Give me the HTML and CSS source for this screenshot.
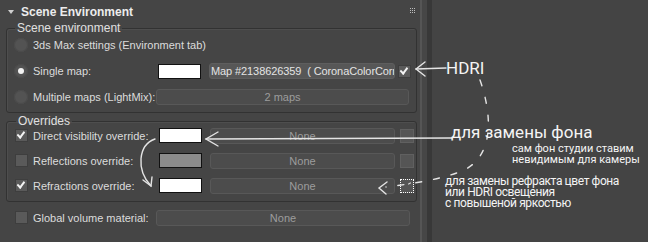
FILE: index.html
```html
<!DOCTYPE html>
<html>
<head>
<meta charset="utf-8">
<link rel="stylesheet" href="styles.css">
</head>
<body>
<div class="app">
  <div class="panel">
    <div class="header">
      <span class="tri"></span>
      <span class="title">Scene Environment</span>
      <svg class="grip" width="6" height="6" viewBox="0 0 6 6"><g fill="#bdbdbd"><rect x="0" y="0" width="1" height="1"/><rect x="2" y="0" width="1" height="1"/><rect x="4" y="0" width="1" height="1"/><rect x="0" y="2" width="1" height="1"/><rect x="2" y="2" width="1" height="1"/><rect x="4" y="2" width="1" height="1"/><rect x="0" y="4" width="1" height="1"/><rect x="2" y="4" width="1" height="1"/><rect x="4" y="4" width="1" height="1"/></g></svg>
    </div>

    <fieldset class="group g1">
      <legend>Scene environment</legend>
      <div class="row r1">
        <span class="radio"></span><span class="label">3ds Max settings (Environment tab)</span>
      </div>
      <div class="row">
        <span class="radio on"></span><span class="label fixed">Single map:</span>
        <span class="swatch"></span>
        <span class="btn map">Map #2138626359&nbsp; ( CoronaColorCorr</span>
        <span class="check on small"></span>
      </div>
      <div class="row">
        <span class="radio"></span><span class="label lm">Multiple maps (LightMix):</span>
        <span class="btn wide">2 maps</span>
      </div>
    </fieldset>

    <fieldset class="group g2">
      <legend>Overrides</legend>
      <div class="row o r1">
        <span class="check on"></span><span class="label fixed2">Direct visibility override:</span>
        <span class="swatch"></span>
        <span class="btn none">None</span>
        <span class="sq"></span>
      </div>
      <div class="row o">
        <span class="check"></span><span class="label fixed2">Reflections override:</span>
        <span class="swatch grey"></span>
        <span class="btn none">None</span>
        <span class="sq"></span>
      </div>
      <div class="row o">
        <span class="check on"></span><span class="label fixed2">Refractions override:</span>
        <span class="swatch"></span>
        <span class="btn none">None</span>
        <span class="sq dotted"><i></i></span>
      </div>
    </fieldset>

    <div class="row gv">
      <span class="check"></span><span class="label lm2">Global volume material:</span>
      <span class="btn gvbtn">None</span>
    </div>
  </div>
  <div class="divider"></div>
  <div class="rest"></div>

  <svg class="overlay" width="648" height="242" viewBox="0 0 648 242">
    <g fill="none" stroke="#e4e4e4" stroke-width="1.4" stroke-linecap="round">
      <path d="M446 68 L416 69"/>
      <path d="M425 62 L416 69 L425 76"/>
      <path d="M452 138 L206 139"/>
      <path d="M218 132 L206 139 L218 146"/>
      <path d="M155 139 C138 145 136 170 151 186"/>
      <path d="M143 180 L151 186 L152 177"/>
      <path d="M480 80 C494 120 492 158 462 171 C442 179 412 184 386 187" stroke-dasharray="6 12"/>
      <path d="M387 182 L379 188 L386 194"/>
    </g>
  </svg>
  <div class="note hdri">HDRI</div>
  <div class="note bg">для замены фона</div>
  <div class="note small1">сам фон студии ставим<br>невидимым для камеры</div>
  <div class="note small2">для замены рефракта цвет фона<br>или HDRI освещения<br>с повышеной яркостью</div>
</div>
</body>
</html>
```
FILE: styles.css
```css
* { box-sizing: border-box; }
html, body { margin: 0; padding: 0; }
body {
  width: 648px;
  height: 242px;
  overflow: hidden;
  background: #444;
  font-family: "Liberation Sans", Arial, sans-serif;
  font-size: 11px;
  color: #dcdcdc;
}
.app {
  position: relative;
  display: flex;
  width: 648px;
  height: 242px;
}
.panel {
  width: 422px;
  height: 242px;
  background: #454545;
  border-right: 2px solid #555;
  display: flex;
  flex-direction: column;
}
.divider {
  width: 10px;
  background: linear-gradient(to right, #464646 0 5px, #383838 5px 10px);
}
.rest {
  flex: 1;
  background: #444;
}

.header {
  height: 22px;
  display: flex;
  align-items: center;
  padding-left: 8px;
  padding-top: 1px;
  position: relative;
  flex: none;
}
.tri {
  width: 0; height: 0;
  border-left: 3px solid transparent;
  border-right: 3px solid transparent;
  border-top: 4px solid #cfcfcf;
  margin-right: 7px;
}
.title {
  font-weight: bold;
  font-size: 12px;
  color: #ececec;
}
.grip { position: absolute; left: 410px; top: 8px; }

.group {
  margin: 0 3px 0 6px;
  padding: 0 0 0 7px;
  border: 1px solid #323232;
  border-radius: 3px;
  box-shadow: inset 1px 1px 0 #4e4e4e;
  min-width: 0;
  flex: none;
}
.group legend {
  font-size: 12px;
  line-height: 12px;
  padding: 0 2px;
  margin-left: 1px;
  color: #e0e0e0;
}
.g1 { padding-bottom: 2px; }
.g2 { margin-top: 2px; padding-bottom: 3px; padding-left: 8px; }

.row {
  height: 26px;
  display: flex;
  align-items: center;
  flex: none;
}
.g1 .r1 { margin-top: -2px; }
.row.o { height: 25px; }
.g2 .r1 { margin-top: -4px; }

.radio {
  width: 14px; height: 14px;
  border-radius: 50%;
  background: #535353;
  box-shadow: inset 0 0 0 1px #4b4b4b;
  margin-right: 5px;
  position: relative;
  flex: none;
}
.radio.on::after {
  content: "";
  position: absolute;
  left: 4px; top: 4px;
  width: 6px; height: 6px;
  border-radius: 50%;
  background: #f2f2f2;
}
.label { white-space: nowrap; flex: none; }
.fixed { width: 125px; }
.lm { width: 123px; }
.fixed2 { width: 126px; }

.check {
  width: 13px; height: 13px;
  background: #5a5a5a;
  border: 1px solid #3e3e3e;
  margin-right: 5px;
  position: relative;
  flex: none;
}
.check.on::after {
  content: "";
  position: absolute;
  left: 2px; top: 1px;
  width: 6px; height: 3px;
  border-left: 2px solid #f4f4f4;
  border-bottom: 2px solid #f4f4f4;
  transform: rotate(-52deg) skewX(-8deg);
  transform-origin: 4px 4px;
}
.check.small { margin: 0 0 0 3px; }

.swatch {
  width: 43px; height: 15px;
  background: #fff;
  border: 1px solid #111;
  flex: none;
  margin-right: 8px;
}
.swatch.grey { background: #8b8b8b; }

.btn {
  height: 16px;
  background: #4c4c4c;
  border: 1px solid #585858;
  border-radius: 3px;
  display: flex;
  align-items: center;
  justify-content: center;
  color: #9d9d9d;
  white-space: nowrap;
  overflow: hidden;
  flex: none;
}
.btn.map {
  width: 186px;
  justify-content: flex-start;
  padding-left: 1px;
  color: #e4e4e4;
  background: #575757;
  border-color: #5e5e5e;
  font-size: 11px;
  letter-spacing: -0.1px;
}
.btn.wide { width: 253px; }
.btn.none { width: 185px; }

.sq {
  width: 14px; height: 14px;
  margin-left: 5px;
  background: #555;
  border: 1px solid #606060;
  flex: none;
  position: relative;
}
.sq.dotted { border: 1px dotted #fff; }
.sq.dotted i {
  position: absolute;
  right: 2px; top: 3px;
  width: 3px; height: 1px;
  background: #ddd;
  transform: rotate(-30deg);
}

.gv { padding-left: 15px; margin-top: 3px; height: 25px; }
.lm2 { width: 123px; }
.btn.gvbtn { width: 254px; height: 16px; }

.overlay { position: absolute; left: 0; top: 0; pointer-events: none; }
.note {
  position: absolute;
  font-family: Roboto, "Noto Sans", sans-serif;
  color: #f4f4f4;
  white-space: nowrap;
}
.hdri { left: 446px; top: 58px; font-size: 17px; }
.bg { left: 451px; top: 122px; font-size: 17px; }
.small1 { left: 512px; top: 143px; font-size: 11px; line-height: 11px; }
.small2 { left: 445px; top: 176px; font-size: 12px; line-height: 11px; letter-spacing: -0.4px; }
```
